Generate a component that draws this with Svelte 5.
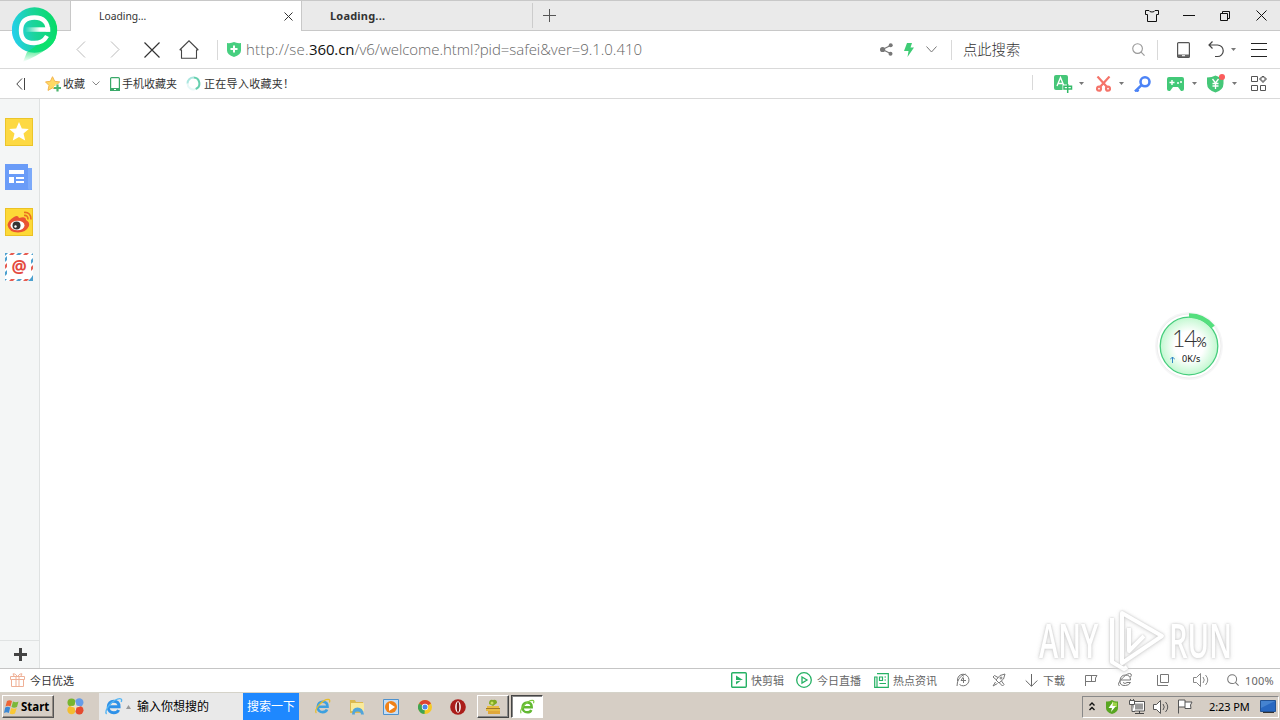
<script>
  let url = {
    scheme: "http://se.",
    host: "360.cn",
    rest: "/v6/welcome.html?pid=safei&ver=9.1.0.410",
  };
  let memory = 14;
  let speed = "0K/s";
  let clock = "2:23 PM";
  let zoom = "100%";
</script>

{#snippet caret()}
  <svg class="caret" width="5" height="3" viewBox="0 0 5 3"><path d="M0 0h5L2.5 3z" fill="#777" /></svg>
{/snippet}

{#snippet magnifier(size, color)}
  <svg width={size} height={size} viewBox="0 0 14 14" fill="none" stroke={color} stroke-width="1.2">
    <circle cx="6" cy="6" r="5.2" />
    <path d="M9.8 9.8l3.7 3.7" />
  </svg>
{/snippet}

{#snippet ieLogo(size, color, ring)}
  <svg width={size} height={size} viewBox="0 0 18 18" fill="none">
    <path d="M4 9.3h10.3C14.3 5.8 12.2 4 9.2 4S4 6.2 4 9.5s2.2 5.500 5.300 5.500c2.200 0 3.800-1 4.500-2.700" stroke={color} stroke-width="2.800" />
    <path d="M2.500 16C-1 13 9 1.500 15 1.500c2 0 2 1.500 1.300 3.200" stroke={ring} stroke-width="1.300" />
  </svg>
{/snippet}

{#snippet speaker(color)}
  <svg width="16" height="14" viewBox="0 0 16 14" fill="none" stroke={color}>
    <path d="M.5 4.500h3l4-4v13l-4-4h-3z" fill="#fff" />
    <path d="M10 4q2.500 3 0 6M12.500 2q4.500 5 0 10" />
  </svg>
{/snippet}

<div class="screen">
  <header class="titlebar">
    <div class="tab active">
      <span>Loading...</span>
      <svg width="9" height="9" viewBox="0 0 9 9" stroke="#333"><path d="M.5.5l8 8M8.500.5l-8 8" /></svg>
    </div>
    <div class="tab inactive"><span>Loading...</span></div>
    <svg class="new-tab" width="13" height="13" viewBox="0 0 13 13" stroke="#555"><path d="M6.500 0v13M0 6.500h13" /></svg>
    <div class="window-buttons">
      <svg width="14" height="12" viewBox="0 0 14 12" fill="none" stroke="#111">
        <path d="M4 .5H.5v4h2v7h9v-7h2v-4H10Q9.500 2 7 2T4 .5z" />
      </svg>
      <svg width="12" height="1" viewBox="0 0 12 1"><path d="M0 0h12v1H0z" fill="#111" /></svg>
      <svg width="10" height="10" viewBox="0 0 10 10" fill="none" stroke="#111">
        <path d="M.5 2.500h7v7h-7zM2.500 2.500v-2h7v7h-2" />
      </svg>
      <svg width="11" height="11" viewBox="0 0 11 11" stroke="#111"><path d="M.5.5l10 10M10.500.5l-10 10" /></svg>
    </div>
  </header>

  <div class="navbar">
    <div class="nav-buttons">
      <svg width="10" height="17" viewBox="0 0 10 17" fill="none" stroke="#bbb"><path d="M9 .5l-8 8 8 8" /></svg>
      <svg width="10" height="17" viewBox="0 0 10 17" fill="none" stroke="#bbb"><path d="M1 .5l8 8-8 8" /></svg>
      <svg width="16" height="16" viewBox="0 0 16 16" stroke="#333" stroke-width="1.200"><path d="M.5.5l15 15M15.500.5l-15 15" /></svg>
      <svg width="20" height="19" viewBox="0 0 20 19" fill="none" stroke="#444" stroke-width="1.100">
        <path d="M.7 10L10 .8l9.300 9.200M.7 10h2.300M19.300 10H17M2.500 10v8.300h15V10" />
      </svg>
    </div>
    <div class="address">
      <svg width="14" height="15" viewBox="0 0 14 15">
        <path d="M7 0q3 1.500 7 1v7.500q0 4-7 6.500-7-2.500-7-6.500V1q4 .5 7-1z" fill="#47cf80" />
        <path d="M7 3.500v7M3.500 7h7" stroke="#fff" stroke-width="2" />
      </svg>
      <div class="url"><span class="scheme">{url.scheme}</span><b>{url.host}</b><span class="rest">{url.rest}</span></div>
      <svg width="13" height="13" viewBox="0 0 13 13">
        <path d="M10.500 2.500L2.500 6.500l8 4" fill="none" stroke="#777" stroke-width="1.200" />
        <circle cx="10.700" cy="2.200" r="2" fill="#777" />
        <circle cx="2.600" cy="6.500" r="2.600" fill="#777" />
        <circle cx="10.500" cy="10.700" r="2" fill="#777" />
      </svg>
      <svg width="10" height="14" viewBox="0 0 10 14"><path d="M3 0h5L6.500 4.500H10L3.500 14l1-6H0z" fill="#3fcc75" /></svg>
      <svg width="11" height="7" viewBox="0 0 11 7" fill="none" stroke="#777"><path d="M.5.5l5 5.500 5-5.500" /></svg>
    </div>
    <div class="search">
      <span>点此搜索</span>
      {@render magnifier(13, "#999")}
    </div>
    <div class="nav-tools">
      <svg width="13" height="16" viewBox="0 0 13 16">
        <rect x=".6" y=".6" width="11.800" height="14.800" rx="1" fill="none" stroke="#555" stroke-width="1.200" />
        <path d="M1 12.500h11V15H1z" fill="#666" />
        <path d="M5 13.700h3" stroke="#fff" />
      </svg>
      <svg width="16" height="17" viewBox="0 0 16 17" fill="none" stroke="#444" stroke-width="1.200">
        <path d="M4.500.5L1 4l3.500 3.500M1 4h8.500a5.700 5.700 0 0 1 0 11.500H7" />
      </svg>
      {@render caret()}
      <svg width="16" height="14" viewBox="0 0 16 14" stroke="#222"><path d="M0 .5h16M0 6.500h16M0 13.500h16" /></svg>
    </div>
  </div>

  <div class="bookmarks">
    <div class="bookmark-items">
      <svg width="10" height="12" viewBox="0 0 10 12" fill="none" stroke="#444"><path d="M6 .5L.8 6 6 11.500M8.500 0v12" /></svg>
      <svg width="17" height="16" viewBox="0 0 17 16">
        <path d="M7.500.7l2.200 4.600 5 .6-3.700 3.500 1 5-4.500-2.500L3 14.400l1-5L.5 5.900l4.900-.6z" fill="#ffd964" stroke="#f3b550" />
        <path d="M12.500 8.500v7M9 12h7" stroke="#fff" stroke-width="4" />
        <path d="M12.500 8.500v7M9 12h7" stroke="#4db56f" stroke-width="2.200" />
      </svg>
      <span>收藏</span>
      <svg width="8" height="5" viewBox="0 0 8 5" fill="none" stroke="#888"><path d="M.5.5L4 4 7.500.5" /></svg>
      <svg width="10" height="14" viewBox="0 0 10 14">
        <rect x=".6" y=".6" width="8.800" height="12.800" rx="1" fill="none" stroke="#3aa969" stroke-width="1.200" />
        <path d="M0 11h10v3H0z" fill="#3aa969" />
        <path d="M4 12.500h2" stroke="#fff" />
      </svg>
      <span>手机收藏夹</span>
      <svg width="15" height="15" viewBox="0 0 15 15" fill="none" stroke-width="2">
        <path d="M7.500 1.500a6 6 0 0 1 2 11.600" stroke="#65cfae" />
        <path d="M9.500 13.100A6 6 0 0 1 1.500 7.500" stroke="#e6f8f7" />
        <path d="M1.500 7.500a6 6 0 0 1 6-6" stroke="#aae6df" />
      </svg>
      <span class="importing">正在导入收藏夹！</span>
    </div>
    <div class="extensions">
      <svg width="19" height="18" viewBox="0 0 19 18">
        <rect width="14" height="15" rx="2" fill="#46c678" />
        <path d="M3 11l3.500-8.500L10 11M4.200 8.500h4.600" fill="none" stroke="#fff" stroke-width="1.300" />
        <path d="M8.500 9.500h10v6h-3V18h-4v-2.500h-3z" fill="#fff" />
        <path d="M10 11.300h7.500v2.700H10zM13.700 9v9" fill="none" stroke="#33ba68" stroke-width="1.500" />
      </svg>
      {@render caret()}
      <svg width="15" height="16" viewBox="0 0 15 16" fill="none" stroke="#f5746a" stroke-width="2.200">
        <path d="M1.500.5L11 11M13.500.5L4 11" />
        <circle cx="3" cy="12.700" r="2" />
        <circle cx="12" cy="12.700" r="2" />
      </svg>
      {@render caret()}
      <svg width="17" height="16" viewBox="0 0 17 16" fill="none" stroke="#4c83f6">
        <circle cx="11" cy="5.800" r="4.500" stroke-width="2.600" />
        <path d="M7.500 9.200L1 15.500M2.500 13.500l2 2" stroke-width="2.500" />
      </svg>
      <svg width="17" height="14" viewBox="0 0 17 14">
        <path d="M2 0h13q2 0 2 2v10q0 2-2 2h-1l-3-4H6l-3 4H2q-2 0-2-2V2q0-2 2-2z" fill="#42c978" />
        <path d="M5 3v5M2.500 5.500h5" stroke="#fff" stroke-width="1.400" />
        <circle cx="11" cy="6" r="1" fill="#fff" /><circle cx="14" cy="5" r="1" fill="#fff" />
      </svg>
      {@render caret()}
      <svg width="18" height="19" viewBox="0 0 18 19">
        <path d="M8.500 1.500q3 2 8 2v6q0 6.500-8 9-8.500-2.500-8.500-9v-6q5 0 8.500-2z" fill="#45c778" />
        <path d="M5.500 5l3 4 3-4M8.500 9v6M5.500 9.500h6M5.500 12h6" fill="none" stroke="#fff" stroke-width="1.300" />
        <circle cx="15" cy="3" r="3" fill="#fb5c5c" />
      </svg>
      {@render caret()}
      <svg width="16" height="15" viewBox="0 0 16 15" fill="none" stroke="#555">
        <path d="M.5.5h6v5h-6zM.5 9.500h6v5h-6zM9.500 9.500h5v5h-5zM11 .5h2v1.500h2v2h-2v2h-2V4H9V2h2z" />
      </svg>
    </div>
  </div>

  <div class="body">
    <aside class="sidebar">
      <div class="side-icons">
        <svg width="28" height="28" viewBox="0 0 28 28">
          <path d="M0 0h28v28H0z" fill="#ebc52a" /><path d="M1 1h26v26H1z" fill="#fdd943" />
          <path d="M14 4l2.800 6.500 7 .5-5.300 4.600 1.700 7L14 19l-6.200 3.600 1.700-7L4.200 11l7-.5z" fill="#fff" />
        </svg>
        <svg width="28" height="26" viewBox="0 0 28 26">
          <path d="M0 0h23v4h4v22H0z" fill="#6a9cf8" /><path d="M23 4h4v20q0 2-2 2t-2-2z" fill="#7caafa" />
          <path d="M4 6h15v4H4zM4 13h5v6H4zM11 13h8v2h-8zM11 17h8v2h-8z" fill="#fff" />
        </svg>
        <svg width="28" height="28" viewBox="0 0 28 28">
          <path d="M0 0h28v28H0z" fill="#ebc124" /><path d="M1 1h26v26H1z" fill="#fdd937" />
          <path d="M2.500 17q1-5 6.500-8 4-2.500 5 1 7-2 7 2 4 2 3 6-3 6.500-11 6.500-9 0-10.500-7.500z" fill="#e95433" />
          <ellipse cx="12.500" cy="17.500" rx="7" ry="4.800" fill="#fff" />
          <circle cx="11.500" cy="17.500" r="4" fill="#333" /><circle cx="10.500" cy="18.500" r="1.200" fill="#fff" />
          <path d="M19 7.500q4-.5 4 4M19 4.500q7-.5 7 7" fill="none" stroke="#e87121" stroke-width="1.700" />
        </svg>
        <div class="mail">
          <svg width="28" height="28" viewBox="0 0 28 28">
            <path d="M0 0h28v28H0z" fill="#fff" />
            <path d="M6 0h4L8 2H4zM20 0h4l-2 2h-4zM28 12v4l-2 2v-4zM22 28h-4l2-2h4zM8 28H4l2-2h4zM0 16v-4l2-2v4z" fill="#e65c51" />
            <path d="M0 0h3L0 3zM13 0h4l-2 2h-4zM28 0v2h-2zM28 5v4l-2 2V7zM28 22v6h-5l3-3zM15 28h-4l2-2h4zM0 28v-2h2zM0 23v-4l2-2v4zM0 9V5l2-2v4z" fill="#4ca0cf" />
          </svg>
          <span>@</span>
        </div>
      </div>
      <div class="side-add">
        <svg width="13" height="13" viewBox="0 0 13 13"><path d="M5 0h3v5h5v3H8v5H5V8H0V5h5z" fill="#444" /></svg>
      </div>
    </aside>
    <main></main>
  </div>

  <div class="statusbar">
    <div class="promo">
      <svg width="15" height="14" viewBox="0 0 15 14" fill="none" stroke="#efb096">
        <path d="M.5 3.500h14v3H.5zM1.500 6.500h12v7h-12zM6 3.500v10M9 3.500v10M4 3L3 .8Q5 0 7.500 3.500 10 0 12 .8L11 3" />
      </svg>
      <span>今日优选</span>
    </div>
    <div class="status-items">
      <svg width="16" height="16" viewBox="0 0 16 16">
        <rect x=".7" y=".7" width="14.600" height="14.600" rx="1" fill="none" stroke="#25b164" stroke-width="1.400" />
        <path d="M5 3.500l7 4.500H5zM5 9.500l5-1L5 12.500z" fill="#25b164" />
      </svg>
      <span>快剪辑</span>
      <svg width="16" height="16" viewBox="0 0 16 16" fill="none" stroke="#25b164" stroke-width="1.300">
        <circle cx="8" cy="8" r="7.300" /><path d="M6 5l5 3-5 3z" />
      </svg>
      <span>今日直播</span>
      <svg width="15" height="15" viewBox="0 0 15 15" fill="none" stroke="#25b164" stroke-width="1.200">
        <path d="M3 .7h11.300v13.600H.7V4H3v10M5.500 4h3v3.500h-3zM10.500 4H12M10.500 7H12M5.500 10.500H12" />
      </svg>
      <span>热点资讯</span>
      <svg width="14" height="14" viewBox="0 0 14 14" fill="none" stroke="#777">
        <path d="M3.500 11.500A5.800 5.800 0 1 0 3 3Q1 5 1.500 8M1 13Q1 4 9.500 1M7.500 3.500L5 7.500h5M7.500 5v5" />
      </svg>
      <svg width="14" height="14" viewBox="0 0 14 14" fill="none" stroke="#777">
        <path d="M13 1Q7.500 1 4 7l3 3q6-3.500 6-9zM6 4.500L2.500 2.500 1 4l3 2.500M9.500 8l2.500 3.500-1.500 1.500L7.500 10M3.500 9L1 13l4.500-2.500" /><circle cx="9" cy="5" r="1" />
      </svg>
      <svg width="13" height="13" viewBox="0 0 13 13" fill="none" stroke="#666"><path d="M6.500 0v12M.7 6.500l5.800 5.800 5.800-5.800" /></svg>
      <span>下载</span>
      <svg width="14" height="12" viewBox="0 0 14 12" fill="none" stroke="#777"><path d="M1.500 12V1.500H13L11.500 4v3.500H1.500M7.500 1.500v6" /></svg>
      <svg width="14" height="14" viewBox="0 0 14 14" fill="none" stroke="#777">
        <path d="M2.500 7h10Q12.500 2 7.500 2T2 7.500t5.500 5q3.500 0 5-3H9q-2 2-4 0M1.500 13q-3-2 3-8T13 1q1 1-.5 3" />
      </svg>
      <svg width="12" height="12" viewBox="0 0 12 12" fill="none" stroke="#777"><path d="M3.500.5h8v8h-8zM.5 1v10.500H11" /></svg>
      {@render speaker("#888")}
      {@render magnifier(12, "#777")}
      <span class="zoom">{zoom}</span>
    </div>
  </div>

  <footer class="taskbar">
    <button class="start">
      <svg width="16" height="16" viewBox="0 0 16 16">
        <path d="M3 2q2.500-1.500 5 0L6.500 7.500Q4 6 1.500 7.500z" fill="#ee6535" />
        <path d="M9 2.500q3 1.500 5.500 0L13 8q-3 1.500-5.500 0z" fill="#7bb83b" />
        <path d="M1.200 8.500q2.500-1.500 5 0L4.800 14Q2.500 12.500 0 14z" fill="#3c88d4" />
        <path d="M7.200 9q3 1.500 5.500 0L11 14.500q-3 1.500-5.300 0z" fill="#fac835" />
      </svg>
      Start
    </button>
    <svg class="flower" width="17" height="17" viewBox="0 0 17 17">
      <circle cx="4.500" cy="4.500" r="4" fill="#76b52f" /><circle cx="12.300" cy="4.500" r="4.200" fill="#659ce8" />
      <circle cx="4.500" cy="12" r="4.200" fill="#f3bd2e" /><circle cx="12.300" cy="12.300" r="4.200" fill="#e54a2e" />
      <path d="M8.500 3l1 4.500 4.500 1-4.500 1-1 4.500-1-4.500-4.500-1 4.500-1z" fill="#e9e0cb" />
    </svg>
    <div class="task-search">
      {@render ieLogo(19, "#2f91e8", "#53b5f4")}
      <svg width="5" height="4" viewBox="0 0 5 4"><path d="M0 4l2.500-4L5 4z" fill="#999" /></svg>
      <span>输入你想搜的</span>
    </div>
    <div class="task-go">搜索一下</div>
    <div class="quick">
      {@render ieLogo(17, "#3da0df", "#e6bd29")}
      <svg width="16" height="16" viewBox="0 0 16 16">
        <path d="M1 1h5l1 2h7v11H1z" fill="#dcb94f" /><path d="M2 4h13v8H2z" fill="#faea9a" />
        <path d="M3 15.500q0-7 5.500-7t6.500 7h-3q0-3-3.500-3t-2.500 3z" fill="#52a5da" />
      </svg>
      <svg width="16" height="16" viewBox="0 0 16 16">
        <path d="M.5.5h15v15H.5z" fill="#c6def5" stroke="#4d91cd" /><circle cx="8" cy="8" r="6" fill="#f08118" />
        <path d="M6 4l6 4-6 4z" fill="#fff" />
      </svg>
      <svg width="14" height="14" viewBox="0 0 14 14">
        <circle cx="7" cy="7" r="7" fill="#f5c927" />
        <path d="M7 7L1 3.500Q3 0 7 0t6 3.500z" fill="#dc4432" />
        <path d="M7 7L1 3.500q-2.300 4 0 7.200Q3 14 6.500 14z" fill="#3fa454" />
        <circle cx="7" cy="7" r="3.200" fill="#fff" /><circle cx="7" cy="7" r="2.500" fill="#4a87e8" />
      </svg>
      <svg width="16" height="16" viewBox="0 0 16 16">
        <circle cx="8" cy="8" r="7.800" fill="#ab1d1a" /><ellipse cx="8" cy="8" rx="2.800" ry="5.800" fill="#fff" /><ellipse cx="8" cy="8" rx="1.300" ry="5" fill="#7b1413" />
      </svg>
    </div>
    <div class="task-button">
      <svg width="16" height="16" viewBox="0 0 16 16">
        <path d="M2 7h12v2h1v3H1V9h1z" fill="#e9bd45" /><path d="M3 12h12v3H3z" fill="#e0a83a" />
        <path d="M4 5q0-5 4-4 4-1 4 3L8 7z" fill="#7faa22" /><circle cx="7" cy="4" r="1.500" fill="#c9e265" />
        <path d="M1 9.500h14" stroke="#9f7829" />
      </svg>
    </div>
    <div class="task-button pressed">{@render ieLogo(16, "#62b832", "#7dcb3f")}</div>
    <div class="tray">
      <svg width="6" height="9" viewBox="0 0 6 9" fill="none" stroke="#111" stroke-width="1.400"><path d="M.5 3.500L3 1l2.500 2.500M.5 8L3 5.500 5.500 8" /></svg>
      <svg width="12" height="14" viewBox="0 0 12 14">
        <path d="M6 0q3 2 6 1.500V8q0 4-6 6-6-2-6-6V1.500Q3 2 6 0z" fill="#59a622" />
        <path d="M6 1.500q3 1.500 5 1V7L6 7z" fill="#9fd44a" /><path d="M7 2L2.500 8H6l-1 4 5-6H6.500z" fill="#fff" />
      </svg>
      <svg width="17" height="15" viewBox="0 0 17 15">
        <path d="M4 2.500h11.500v9.500H4z" fill="#fff" stroke="#555" /><path d="M6 4.500h8v6H6z" fill="#999" />
        <path d="M6 14.500h9M10.500 12v2" stroke="#444" />
        <path d="M.5 1.500h5v4h-5zM3 5.500v7h3M1.500 0v2M4.500 0v2" fill="#fff" stroke="#555" />
      </svg>
      {@render speaker("#555")}
      <svg width="17" height="15" viewBox="0 0 17 15"><path d="M1.500 14.500V1h6.500v2H15l-1.500 3 .5 3.500H8V8H1.500M8 3v5" fill="#fff" stroke="#555" /></svg>
      <span>{clock}</span>
      <svg width="16" height="14" viewBox="0 0 16 14">
        <path d="M.5.5h15v11H.5z" fill="#2868c1" stroke="#235394" /><path d="M1 1h14L1 8z" fill="#4583d0" /><path d="M3 12.500h11" stroke="#333" />
      </svg>
    </div>
  </footer>

  <svg class="logo" width="46" height="56" viewBox="0 0 46 56">
    <defs>
      <linearGradient id="drop" x1="0" y1=".65" x2="1" y2=".5">
        <stop offset="0" stop-color="#25cff0" /><stop offset=".5" stop-color="#1bd49c" /><stop offset="1" stop-color="#07dc67" />
      </linearGradient>
      <linearGradient id="tail" x1="0" y1="0" x2="0" y2="1">
        <stop offset="0" stop-color="#0be26b" /><stop offset=".3" stop-color="#0be26b" /><stop offset="1" stop-color="#0be26b" stop-opacity="0" />
      </linearGradient>
      <linearGradient id="bar" gradientUnits="userSpaceOnUse" x1="13" y1="0" x2="38" y2="0">
        <stop offset="0" stop-color="#fff" stop-opacity="0" /><stop offset=".6" stop-color="#fff" />
      </linearGradient>
    </defs>
    <circle cx="22.500" cy="23" r="22.700" fill="url(#drop)" />
    <path d="M44 30Q41 42 11 55l4-10 15-10z" fill="url(#tail)" />
    <path d="M36 24.500q0-14-13.500-14Q9 10.500 9 23.500T22.500 36q8.500 0 12.500-7" fill="none" stroke="#fff" stroke-width="4.400" />
    <path d="M13 20.300h25.200v4.500H13z" fill="url(#bar)" />
  </svg>

  <div class="speed-ball">
    <svg width="70" height="70" viewBox="0 0 70 70">
      <defs>
        <radialGradient id="ball"><stop offset=".5" stop-color="#fff" /><stop offset="1" stop-color="#c2f8d0" /></radialGradient>
      </defs>
      <circle cx="35" cy="35" r="34" fill="#f6f6f7" />
      <circle cx="35" cy="35" r="32" fill="#fff" stroke="#eee" />
      <circle cx="35" cy="35" r="28.800" fill="url(#ball)" stroke="#45cd7c" stroke-width="1.300" />
      <path d="M35 4.500A30.500 30.500 0 0 1 59 16" fill="none" stroke="#54df7d" stroke-width="4.500" />
    </svg>
    <div class="ball-text">
      <div class="percent"><span>{memory}</span><small>%</small></div>
      <div class="rate">
        <svg width="5" height="7" viewBox="0 0 5 7" fill="none" stroke="#3286c7"><path d="M2.500 7V1M0 3.500L2.500 1 5 3.500" /></svg>
        {speed}
      </div>
    </div>
  </div>

  <div class="watermark">
    <span>ANY</span>
    <svg width="58" height="64" viewBox="0 0 58 64" fill="none" stroke="#fff" stroke-width="4">
      <path d="M15 5l40 23-40 27zM5 10v44l12 7 3-2M22 20v23l15-15" stroke-linejoin="round" />
    </svg>
    <span>RUN</span>
  </div>
</div>

<style>
  :global(body) {
    margin: 0;
  }

  .screen {
    position: relative;
    width: 1280px;
    height: 720px;
    overflow: hidden;
    display: flex;
    flex-direction: column;
    background: #fff;
    color: #333;
    font: 11px/14px "Noto Sans", "Noto Sans CJK SC", sans-serif;
  }

  .screen * {
    box-sizing: border-box;
  }

  svg {
    display: block;
    flex: none;
  }

  span {
    white-space: nowrap;
  }

  .titlebar {
    flex: none;
    height: 31px;
    display: flex;
    align-items: center;
    padding-left: 70px;
    background: #eaeaea;
    box-shadow: inset 0 -1px #c8c8c8, inset 0 1px #c8c8c8;
  }

  .tab {
    display: flex;
    align-items: center;
    justify-content: space-between;
  }

  .tab.active {
    width: 232px;
    height: 31px;
    padding: 0 8px 0 28px;
    background: #fff;
    border: 1px solid #c8c8c8;
    border-bottom: 0;
    font-size: 10.3px;
  }

  .tab.inactive {
    width: 231px;
    height: 25px;
    padding-left: 28px;
    border-right: 1px solid #ccc;
    font: bold 11px/14px "Noto Sans", sans-serif;
    letter-spacing: 0.2px;
  }

  .new-tab {
    margin-left: 10px;
  }

  .window-buttons {
    margin-left: auto;
    display: grid;
    grid-template-columns: 38px 37px 36px 24px;
    align-items: center;
  }

  .navbar {
    flex: none;
    height: 38px;
    display: grid;
    grid-template-columns: 217px 734px 206px 123px;
    border-bottom: 1px solid #d9d9d9;
  }

  .navbar > div {
    display: grid;
    align-items: center;
  }

  .nav-buttons {
    padding-left: 76px;
    grid-template-columns: 34px 34px 35px 38px;
  }

  .address,
  .search,
  .nav-tools {
    background: linear-gradient(#d9d9d9, #d9d9d9) 0 9px / 1px 20px no-repeat;
  }

  .address {
    padding-left: 10px;
    grid-template-columns: 19px 634px 24px 22px 25px;
  }

  .url {
    padding-bottom: 2px;
    font: 300 15px/20px "Open Sans", "Noto Sans", sans-serif;
    color: #666;
    white-space: nowrap;
  }

  .url b {
    font-weight: 400;
    color: #111;
    letter-spacing: -0.1px;
  }

  .scheme {
    letter-spacing: 0.25px;
  }

  .rest {
    letter-spacing: -0.04px;
  }

  .search {
    padding-left: 12px;
    grid-template-columns: 169px 25px;
    font: 300 14.3px/20px "Noto Sans CJK SC", sans-serif;
  }

  .search span {
    padding-bottom: 2px;
  }

  .nav-tools {
    padding-left: 20px;
    grid-template-columns: 31px 23px 20px 29px;
  }

  .bookmarks {
    flex: none;
    height: 30px;
    display: flex;
    justify-content: space-between;
    align-items: center;
    border-bottom: 1px solid #d9d9d9;
  }

  .bookmark-items {
    display: grid;
    align-items: center;
    padding-left: 16px;
    grid-template-columns: 29px 18px 29px 18px 12px 64px 18px 100px;
  }

  .importing {
    letter-spacing: 0.3px;
  }

  .extensions {
    width: 248px;
    height: 19px;
    display: grid;
    align-items: center;
    padding-left: 22px;
    grid-template-columns: 25px 17px 23px 15px 33px 25px 15px 25px 19px 29px;
    background: linear-gradient(#d9d9d9, #d9d9d9) 0 1px / 1px 15px no-repeat;
  }

  .body {
    flex: none;
    height: 569px;
    display: flex;
  }

  main {
    flex: 1;
  }

  .sidebar {
    width: 40px;
    display: flex;
    flex-direction: column;
    justify-content: space-between;
    background: #f4f6f6;
    border-right: 1px solid #dfe2e2;
  }

  .side-icons {
    padding: 19px 0 0 5px;
    display: grid;
    grid-template-rows: 46px 44px 45px 28px;
  }

  .mail {
    display: grid;
  }

  .mail > * {
    grid-area: 1 / 1;
  }

  .mail span {
    width: 28px;
    text-align: center;
    color: #e34940;
    font: bold 17px/27px "Open Sans", sans-serif;
  }

  .side-add {
    height: 28px;
    display: flex;
    align-items: center;
    padding-left: 14px;
    border-top: 1px solid #e0e3e3;
  }

  .statusbar {
    flex: none;
    height: 25px;
    display: flex;
    justify-content: space-between;
    align-items: center;
    border-top: 1px solid #c5c5c5;
    border-bottom: 1px solid #d5d3c9;
  }

  .statusbar svg {
    margin-bottom: 1px;
  }

  .promo {
    padding-left: 10px;
    display: flex;
    gap: 5px;
    align-items: center;
  }

  .status-items {
    display: grid;
    width: 549px;
    align-items: center;
    color: #666;
    grid-template-columns: 20px 45px 21px 57px 19px 63px 36px 33px 18px 41px 34px 39px 36px 34px 18px 35px;
  }

  .zoom {
    letter-spacing: 0.2px;
  }

  .taskbar {
    flex: none;
    height: 27px;
    display: flex;
    align-items: center;
    background: #d6cec5;
    color: #000;
  }

  .start {
    width: 52px;
    height: 23px;
    margin-left: 2px;
    display: flex;
    align-items: center;
    gap: 1px;
    padding: 0 0 0 1px;
    background: #d6cec5;
    border: 1px solid;
    border-color: #fff #555 #555 #fff;
    box-shadow: inset -1px -1px #948c84;
    font: bold 11.5px/14px "Noto Sans", sans-serif;
  }

  .flower {
    margin-left: 13px;
  }

  .task-search {
    width: 144px;
    height: 27px;
    margin-left: 15px;
    display: flex;
    align-items: center;
    gap: 3px;
    padding-left: 5px;
    background: #e9e9e9;
    font-size: 12px;
  }

  .task-search span {
    margin-left: 3px;
  }

  .task-go {
    width: 56px;
    height: 28px;
    padding: 7px 4px;
    background: #1e88ff;
    color: #fff;
    font-size: 12px;
    white-space: nowrap;
  }

  .quick {
    padding-left: 15px;
    display: grid;
    align-items: center;
    grid-template-columns: 35px 34px 35px 32px 27px;
  }

  .task-button {
    width: 32px;
    height: 23px;
    margin-right: 2px;
    display: flex;
    align-items: center;
    justify-content: center;
    border: 1px solid;
    border-color: #fff #444 #444 #fff;
    box-shadow: inset -1px -1px #888;
  }

  .task-button.pressed {
    background: #fff;
    border-color: #444 #fff #fff #444;
    box-shadow: inset 1px 1px #888;
  }

  .tray {
    width: 197px;
    height: 22px;
    margin: 0 1px 0 auto;
    padding-left: 6px;
    display: grid;
    align-items: center;
    grid-template-columns: 17px 23px 24px 24px 32px 51px 16px;
    border: 1px solid;
    border-color: #888 #fff #fff #888;
  }

  .tray span {
    letter-spacing: -0.1px;
  }

  .logo {
    position: absolute;
    left: 12px;
    top: 7px;
  }

  .speed-ball {
    position: absolute;
    left: 1154px;
    top: 311px;
    display: grid;
  }

  .speed-ball > * {
    grid-area: 1 / 1;
  }

  .ball-text {
    padding-top: 15px;
    color: #333;
  }

  .percent {
    height: 27px;
    display: flex;
    align-items: baseline;
    padding-left: 18px;
    font: 300 23px/24px Lato, sans-serif;
    letter-spacing: -1.2px;
  }

  .percent small {
    font-size: 13px;
    font-weight: 400;
  }

  .rate {
    display: flex;
    align-items: center;
    gap: 7px;
    padding-left: 16px;
    font-size: 9px;
    line-height: 12px;
    color: #111;
  }

  .watermark {
    position: absolute;
    left: 1039px;
    top: 608px;
    height: 64px;
    display: flex;
    align-items: center;
    gap: 4px;
    color: #fff;
    font: 600 47px/64px "Open Sans", sans-serif;
    filter: drop-shadow(0 0 1px #bbb) drop-shadow(0 1px 2px #ddd);
    opacity: 0.85;
  }

  .watermark span {
    width: 64px;
    transform: scaleX(0.62);
    transform-origin: left;
  }
</style>
